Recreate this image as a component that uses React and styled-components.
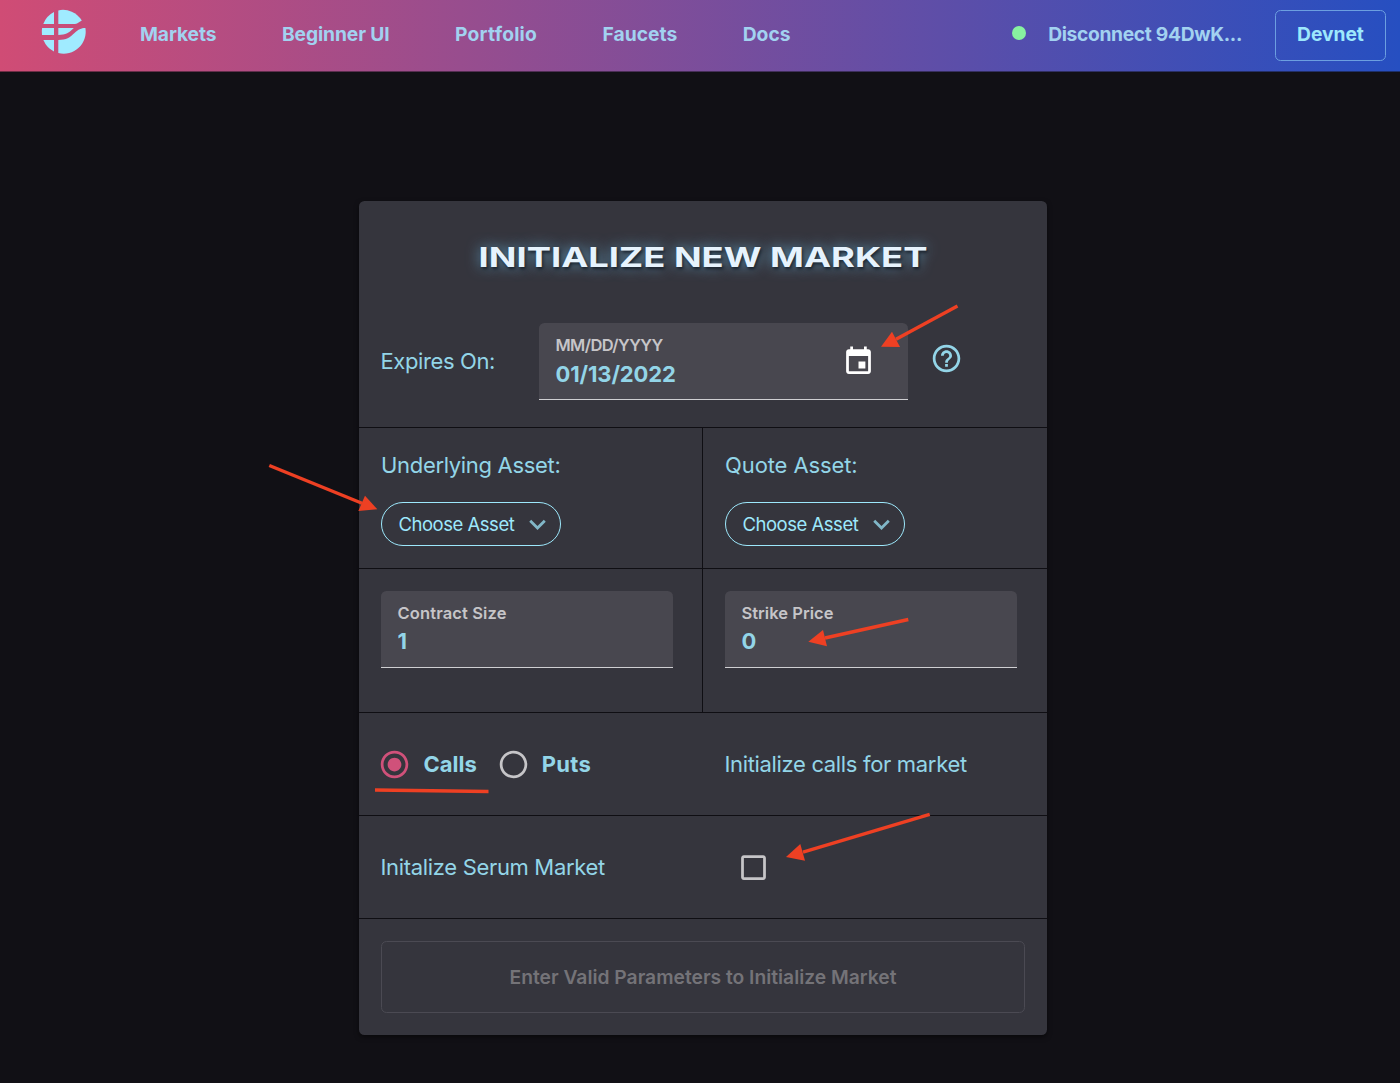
import React from "react";
import styled, { createGlobalStyle } from "styled-components";

const c = {
  page: "#111015",
  card: "#35353d",
  field: "#48474f",
  line: "#0f0e13",
  text: "#93d5e8",
  bright: "#9de8fc",
  muted: "#c6c5c8",
  pink: "#d0517a",
  red: "#ee4023",
};

const GlobalStyle = createGlobalStyle`
  *, *::before, *::after { box-sizing: border-box; }
  body {
    margin: 0;
    min-height: 1083px;
    background: ${c.page};
    color: ${c.text};
    font-family: Inter, "Liberation Sans", sans-serif;
  }
`;

const Page = styled.div`
  position: relative;
  height: 1083px;
  overflow: hidden;
`;

const Header = styled.header`
  display: flex;
  align-items: flex-start;
  justify-content: space-between;
  height: 72px;
  padding: 10px 14px 0 41px;
  border-bottom: 1px solid rgba(17, 16, 21, 0.5);
  background: linear-gradient(90deg, #d04c75 0%, #264fc1 100%) border-box;
`;

const Logo = styled.svg`
  display: block;
  width: 46px;
  height: 46px;
  margin: -5px 0 0 -0.5px;
`;

const Nav = styled.nav`
  display: flex;
  height: 48px;
  align-items: center;
`;

const Links = styled.div`
  display: flex;
  gap: 65.5px;
  margin-left: 53.5px;
`;

const NavLink = styled.a`
  font-size: 19.25px;
  line-height: 24px;
  font-weight: 700;
  white-space: nowrap;
  color: #a2d2f0;
  letter-spacing: ${(p) => p.$track || 0}px;
`;

const Account = styled.div`
  display: flex;
  align-items: center;
  height: 48px;
`;

const Dot = styled.span`
  width: 14px;
  height: 14px;
  margin: -2px 22px 0 0;
  border-radius: 50%;
  background: #87f2a0;
`;

const Network = styled.button`
  align-self: flex-start;
  width: 111px;
  height: 51px;
  margin-left: 33px;
  padding: 0 0 3px;
  border: 1px solid #6c9fe0;
  border-radius: 5.5px;
  background: transparent;
  color: ${c.bright};
  font: 700 19.25px Inter, sans-serif;
  letter-spacing: -0.05px;
`;

const Card = styled.main`
  width: 688px;
  height: 834px;
  margin: 129px 0 0 359px;
  border-radius: 5.5px;
  background: ${c.card};
  box-shadow: 0 2px 5px rgba(0, 0, 0, 0.5);
`;

const Section = styled.section`
  height: ${(p) => p.$height}px;
  border-bottom: ${(p) => (p.$last ? "none" : `1px solid ${c.line}`)};
`;

const Columns = styled(Section)`
  display: grid;
  grid-template-columns: 344px 344px;
`;

const Cell = styled.div`
  display: flex;
  flex-direction: column;
  align-items: flex-start;
  padding: 22px;
  border-right: ${(p) => (p.$divided ? `1px solid ${c.line}` : "none")};
`;

const Title = styled.h1`
  margin: 0;
  padding-top: 38px;
  text-align: center;
  font-size: 27.5px;
  line-height: 36px;
  font-weight: 700;
  color: #e6f3fd;
  white-space: nowrap;
  transform: scaleX(1.322);
  text-shadow: 1px 2px 3px rgba(8, 14, 22, 0.75), 0 0 12px rgba(110, 185, 225, 0.8);
`;

const ExpiryRow = styled.div`
  display: flex;
  align-items: center;
  margin-top: 48px;
  padding-left: 21.5px;
`;

const Text = styled.span`
  font-size: 22px;
  line-height: 30px;
  font-weight: ${(p) => (p.$strong ? 700 : 400)};
  letter-spacing: ${(p) => p.$track || 0}px;
  white-space: nowrap;
`;

const ExpiryLabel = styled(Text)`
  width: 158.5px;
  margin-top: -1px;
`;

const Field = styled.label`
  display: flex;
  align-items: center;
  justify-content: space-between;
  width: ${(p) => p.$width}px;
  height: 77px;
  padding: 0 33px 0 16.5px;
  border-bottom: 1px solid #cfcfd2;
  border-radius: 5.5px 5.5px 0 0;
  background: ${c.field};
`;

const FieldText = styled.span`
  display: flex;
  flex-direction: column;
  gap: ${(p) => p.$gap}px;
  margin-top: ${(p) => p.$shift}px;
`;

const FieldLabel = styled.span`
  font-size: 16.5px;
  line-height: 20px;
  font-weight: 600;
  color: ${c.muted};
  letter-spacing: ${(p) => p.$track || 0}px;
`;

const FieldValue = styled.span`
  font-size: 22px;
  line-height: 26px;
  font-weight: 700;
  letter-spacing: -0.12px;
`;

const Icon = styled.svg`
  display: block;
  flex: none;
  width: 33px;
  height: 33px;
  fill: ${(p) => p.$color};
`;

const HelpIcon = styled(Icon)`
  margin: -6px 0 0 22px;
`;

const AssetButton = styled.button`
  display: flex;
  align-items: center;
  justify-content: space-between;
  width: 180px;
  height: 44px;
  margin-top: 22px;
  padding: 0 6px 0 16.5px;
  border: 1.4px solid ${c.bright};
  border-radius: 22px;
  background: transparent;
  color: ${c.bright};
  font: 400 18.5px Inter, sans-serif;
  letter-spacing: -0.48px;
  white-space: nowrap;
`;

const TypeRow = styled(Section)`
  display: grid;
  grid-template-columns: 344px 344px;
  align-items: center;
  padding-left: 19.4px;
`;

const Options = styled.div`
  display: flex;
  align-items: center;
`;

const Option = styled.label`
  display: flex;
  align-items: center;
  gap: 12px;
  width: 118.3px;
`;

const TypeHint = styled(Text)`
  padding-left: 2px;
`;

const SerumRow = styled(Section)`
  display: grid;
  grid-template-columns: 356.5px 1fr;
  align-items: center;
  padding-left: 21.5px;
`;

const Footer = styled(Section)`
  padding: 22px 22px 0;
`;

const Submit = styled.button`
  display: block;
  width: 644px;
  height: 72px;
  padding: 0;
  border: 1.4px solid #4b4a53;
  border-radius: 5.5px;
  background: transparent;
  color: #747378;
  font: 600 19.25px Inter, sans-serif;
  letter-spacing: 0;
`;

const Annotations = styled.svg`
  position: absolute;
  inset: 0;
  width: 1400px;
  height: 1083px;
  pointer-events: none;
`;

const links = [
  ["Markets", -0.1],
  ["Beginner UI", -0.12],
  ["Portfolio", 0.22],
  ["Faucets", 0],
  ["Docs", 0],
];

// Each arrow: shaft start, shaft end and the three corners of its head.
const arrows = [
  { from: [957.5, 306], to: [896, 339.3], head: "881,346.8 892,331.7 900,347" },
  { from: [269.3, 465.5], to: [362, 503.3], head: "377.3,509.3 365,495.7 358.3,511" },
  { from: [908.3, 619.5], to: [825, 638], head: "808.3,641.7 823,630 827,646.3" },
  { from: [929.7, 814.3], to: [803, 852.2], head: "786,857 800.3,844 805,860.7" },
];

function Asset({ label, track, divided }) {
  return (
    <Cell $divided={divided}>
      <Text $track={track}>{label}</Text>
      <AssetButton>
        Choose Asset
        <Icon viewBox="0 0 24 24" $color="#81b7c8">
          <path d="M7.41 8.59 12 13.17l4.59-4.58L18 10l-6 6-6-6z" />
        </Icon>
      </AssetButton>
    </Cell>
  );
}

function Amount({ label, value, track, divided }) {
  return (
    <Cell $divided={divided}>
      <Field $width={292}>
        <FieldText $gap={5} $shift={-1}>
          <FieldLabel $track={track}>{label}</FieldLabel>
          <FieldValue>{value}</FieldValue>
        </FieldText>
      </Field>
    </Cell>
  );
}

export default function App() {
  return (
    <Page>
      <GlobalStyle />
      <Header>
        <Nav>
          <Logo viewBox="41 9 46 46" fill="#a0ebff">
            <path d="M54 12.1V24H43.3A22 22 0 0 1 54 12.1Z" />
            <path d="M58.3 10.4A22 22 0 0 1 81.8 20.5L77 23.6Q76.2 24 75 24H58.3Z" />
            <path d="M42.1 28H54V35H42A22 22 0 0 1 42.1 28Z" />
            <path d="M58.3 28H73.8C69.5 32.5 65.5 34.9 58.3 35Z" />
            <path d="M43.4 40H54V51.5A22 22 0 0 1 43.4 40Z" />
            <path d="M58.3 40C66.5 39.9 69.8 37.5 74.5 33C78.5 29.2 81 28.2 85.4 28A22 22 0 0 1 58.3 53Z" />
          </Logo>
          <Links>
            {links.map(([name, track]) => (
              <NavLink key={name} $track={track}>{name}</NavLink>
            ))}
          </Links>
        </Nav>
        <Account>
          <Dot />
          <NavLink $track={-0.34}>Disconnect 94DwK...</NavLink>
          <Network>Devnet</Network>
        </Account>
      </Header>

      <Card>
        <Section $height={227}>
          <Title>INITIALIZE NEW MARKET</Title>
          <ExpiryRow>
            <ExpiryLabel $track={-0.38}>Expires On:</ExpiryLabel>
            <Field $width={369}>
              <FieldText $gap={6} $shift={0}>
                <FieldLabel $track={-0.6}>MM/DD/YYYY</FieldLabel>
                <FieldValue>01/13/2022</FieldValue>
              </FieldText>
              <Icon viewBox="0 0 24 24" $color="#fff">
                <path d="M17 12h-5v5h5v-5zM16 1v2H8V1H6v2H5c-1.11 0-1.99.9-1.99 2L3 19c0 1.1.89 2 2 2h14c1.1 0 2-.9 2-2V5c0-1.1-.9-2-2-2h-1V1h-2zm3 18H5V8h14v11z" />
              </Icon>
            </Field>
            <HelpIcon viewBox="0 0 24 24" $color={c.text}>
              <path d="M11 18h2v-2h-2v2zm1-16C6.48 2 2 6.48 2 12s4.48 10 10 10 10-4.48 10-10S17.52 2 12 2zm0 18c-4.41 0-8-3.59-8-8s3.59-8 8-8 8 3.59 8 8-3.59 8-8 8zm0-14c-2.21 0-4 1.79-4 4h2c0-1.1.9-2 2-2s2 .9 2 2c0 2-3 1.75-3 5h2c0-2.25 3-2.5 3-5 0-2.21-1.79-4-4-4z" />
            </HelpIcon>
          </ExpiryRow>
        </Section>

        <Columns $height={141}>
          <Asset label="Underlying Asset:" track={-0.32} divided />
          <Asset label="Quote Asset:" track={-0.1} />
        </Columns>

        <Columns $height={144}>
          <Amount label="Contract Size" value="1" track={0.13} divided />
          <Amount label="Strike Price" value="0" track={0.03} />
        </Columns>

        <TypeRow $height={103}>
          <Options>
            <Option>
              <Icon viewBox="0 0 24 24" $color={c.pink}>
                <path d="M12 7c-2.76 0-5 2.24-5 5s2.24 5 5 5 5-2.24 5-5-2.24-5-5-5zm0-5C6.48 2 2 6.48 2 12s4.48 10 10 10 10-4.48 10-10S17.52 2 12 2zm0 18c-4.42 0-8-3.58-8-8s3.58-8 8-8 8 3.58 8 8-3.58 8-8 8z" />
              </Icon>
              <Text $strong $track={0.03}>Calls</Text>
            </Option>
            <Option>
              <Icon viewBox="0 0 24 24" $color={c.muted}>
                <path d="M12 2C6.48 2 2 6.48 2 12s4.48 10 10 10 10-4.48 10-10S17.52 2 12 2zm0 18c-4.42 0-8-3.58-8-8s3.58-8 8-8 8 3.58 8 8-3.58 8-8 8z" />
              </Icon>
              <Text $strong $track={0.3}>Puts</Text>
            </Option>
          </Options>
          <TypeHint $track={-0.328}>Initialize calls for market</TypeHint>
        </TypeRow>

        <SerumRow $height={103}>
          <Text $track={-0.326}>Initalize Serum Market</Text>
          <Icon viewBox="0 0 24 24" $color={c.muted}>
            <path d="M19 5v14H5V5h14m0-2H5c-1.1 0-2 .9-2 2v14c0 1.1.9 2 2 2h14c1.1 0 2-.9 2-2V5c0-1.1-.9-2-2-2z" />
          </Icon>
        </SerumRow>

        <Footer $height={116} $last>
          <Submit>Enter Valid Parameters to Initialize Market</Submit>
        </Footer>
      </Card>

      <Annotations viewBox="0 0 1400 1083" fill={c.red} stroke={c.red}>
        {arrows.map((a) => (
          <g key={a.head}>
            <line x1={a.from[0]} y1={a.from[1]} x2={a.to[0]} y2={a.to[1]} strokeWidth="3.4" />
            <polygon points={a.head} stroke="none" />
          </g>
        ))}
        <line x1="375" y1="790" x2="488.5" y2="791.5" strokeWidth="3.4" />
      </Annotations>
    </Page>
  );
}
